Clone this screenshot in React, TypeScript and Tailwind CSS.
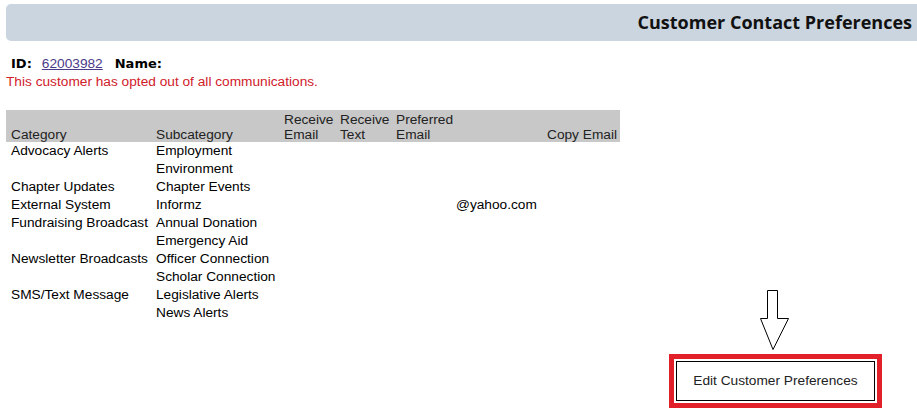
const rows: [string, string, string?][] = [
  ['Advocacy Alerts', 'Employment'],
  ['', 'Environment'],
  ['Chapter Updates', 'Chapter Events'],
  ['External System', 'Informz', '@yahoo.com'],
  ['Fundraising Broadcast', 'Annual Donation'],
  ['', 'Emergency Aid'],
  ['Newsletter Broadcasts', 'Officer Connection'],
  ['', 'Scholar Connection'],
  ['SMS/Text Message', 'Legislative Alerts'],
  ['', 'News Alerts'],
];

const cols = 'grid grid-cols-[145px_128px_56px_56px_60px_91px_78px]';

function DownArrow() {
  return (
    <svg width="32" height="62" viewBox="0 0 32 62" className="absolute left-[85px] top-[-69px]">
      <path d="M8.5 0.5 H18.5 V28.5 H29.5 L14 59.5 L1.5 28.5 H8.5 Z" fill="white" stroke="black" strokeWidth="1" />
    </svg>
  );
}

export default function App() {
  return (
    <div className="min-h-[411px] w-[917px] bg-white pt-[4px] font-['Liberation_Sans',Arial,sans-serif] text-[13.7px] text-black">
      <div className="ml-[6px] flex h-[37px] items-center justify-end rounded-l-[5px] bg-[#cbd5df] pr-[5px]">
        <h1 className="font-['Open_Sans',sans-serif] text-[18px] font-bold text-[#111]">
          Customer Contact Preferences
        </h1>
      </div>

      <div className="ml-[11px] mt-[13px] flex items-center gap-[10px] leading-[19px]">
        <span className="font-['DejaVu_Sans',sans-serif] text-[13px] font-bold">ID:</span>
        <a href="#" className="text-[#4b3a8a] underline">62003982</a>
        <span className="ml-[2px] font-['DejaVu_Sans',sans-serif] text-[13px] font-bold">Name:</span>
      </div>
      <p className="ml-[6px] leading-[18px] text-[#d0202a]">This customer has opted out of all communications.</p>

      <div className="ml-[6px] mt-[19px] w-[614px]">
        <div className={`${cols} h-[32px] items-end bg-[#c8c8c8] leading-[15px] text-[#222]`}>
          <div className="pl-[5px]">Category</div>
          <div className="pl-[5px]">Subcategory</div>
          <div className="pl-[5px]">Receive<br />Email</div>
          <div className="pl-[5px]">Receive<br />Text</div>
          <div className="pl-[5px]">Preferred<br />Email</div>
          <div />
          <div className="pl-[5px]">Copy Email</div>
        </div>
        <div>
          {rows.map(([cat, sub, email], i) => (
            <div key={i} className={`${cols} h-[18px] items-center leading-[18px]`}>
              <div className="pl-[5px] whitespace-nowrap">{cat}</div>
              <div className="pl-[5px] whitespace-nowrap">{sub}</div>
              <div />
              <div />
              <div />
              <div className="pl-[5px]">{email}</div>
              <div />
            </div>
          ))}
        </div>
      </div>

      <div className="mt-[32px] flex justify-end pr-[35px]">
        <div className="relative border-[5px] border-[#e2202a] p-[2px]">
          <DownArrow />
          <button className="flex h-[40px] w-[199px] items-center justify-center border border-black bg-white text-[13.7px] text-[#222]">
            Edit Customer Preferences
          </button>
        </div>
      </div>
    </div>
  );
}
